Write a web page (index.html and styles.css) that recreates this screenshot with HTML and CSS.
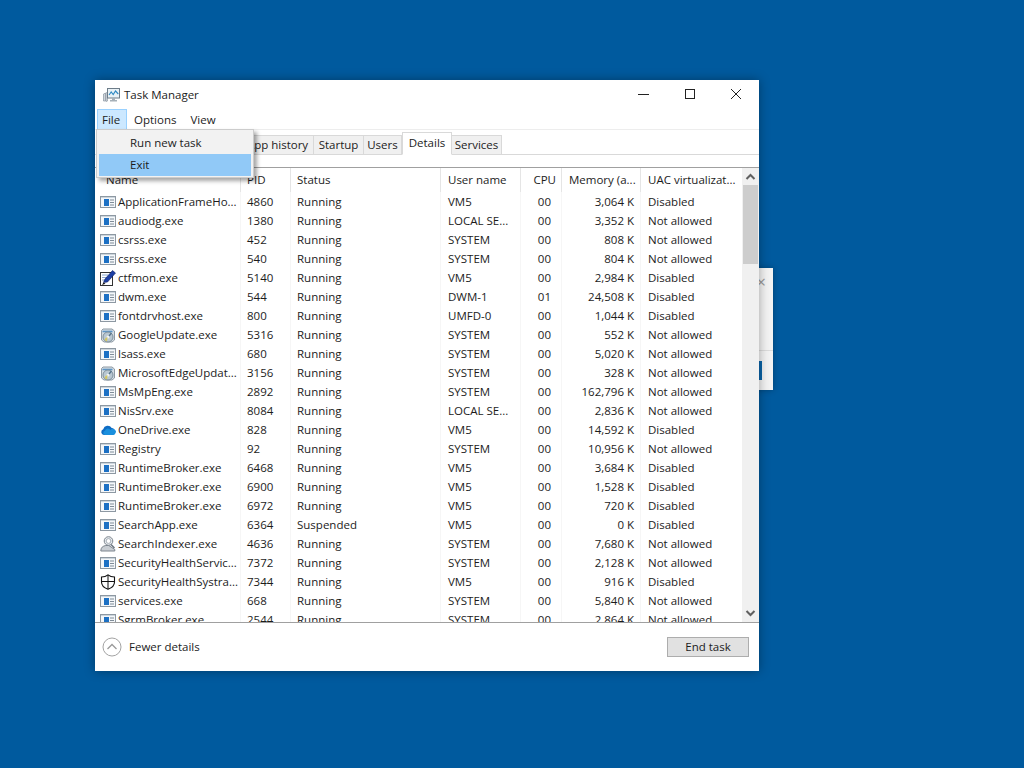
FILE: index.html
```html
<!DOCTYPE html>
<html lang="en">
<head>
<meta charset="utf-8">
<title>Task Manager</title>
<link rel="stylesheet" href="styles.css">
</head>
<body>
<svg class="defs" width="0" height="0">
<symbol id="app" viewBox="0 0 16 16"><rect x=".5" y="2.500" width="15" height="11" fill="#f4f7fa" stroke="#8d98a2"/><rect x="1" y="3" width="14" height="1" fill="#ccd5dc"/><rect x="4" y="5" width="5" height="7" fill="#1c70c4"/><path d="M10 6h4M10 8.500h4M10 11h4" stroke="#7f8c98"/></symbol>
<symbol id="pen" viewBox="0 0 16 16"><rect x=".5" y="2.500" width="12" height="13" fill="#fff" stroke="#333"/><path d="M2 5h6M2 7.500h5M2 10h3" stroke="#8aa8d0"/><path d="M3.500 12.500L5 9l7.500-8.500 3 2.500L7.500 12z" fill="#1d3fa6" stroke="#0c1e60" stroke-width=".6"/><path d="M2 15l1.500-2.500 2 1.200z" fill="#111"/></symbol>
<symbol id="upd" viewBox="0 0 16 16"><path d="M3 2h9l2.500 2v9L12 15H4l-2.500-2V3.500z" fill="#d5dde3" stroke="#8f9ba5"/><path d="M2.500 4.500h10" stroke="#5c95c6" stroke-width="1.600"/><circle cx="8" cy="10" r="5" fill="#b9c7d1" stroke="#7d8f9c"/><circle cx="8" cy="10" r="1.500" fill="#eef2f5"/><path d="M4.500 13a4.500 4.500 0 0 1 3-3l-.5 4.500z" fill="#d5c760"/><path d="M9 9l2.500-3" stroke="#55738a" stroke-width="1.300"/></symbol>
<symbol id="cloud" viewBox="0 0 16 16"><path d="M4 13a3 3 0 0 1-.8-5.800A4.700 4.700 0 0 1 11.700 6 3.600 3.600 0 0 1 12.500 13z" fill="#0f6cc4"/><path d="M5 13a2.200 2.200 0 0 1 0-4.300 3 3 0 0 1 5.500-.6 2.600 2.600 0 0 1 4.800 3.400Q14.800 13 12.500 13z" fill="#1a8fdd"/></symbol>
<symbol id="user" viewBox="0 0 16 16"><path d="M.8 15c0-3.500 2-5 5-5.500h3l6 4v1.500z" fill="#c9ced3" stroke="#7c858e"/><circle cx="8.500" cy="5" r="4.300" fill="#e9ecef" stroke="#7c858e"/><circle cx="8.500" cy="5" r="2.400" fill="#fff" stroke="#a5aeb6"/><path d="M11 8.500l3.500 3.500" stroke="#6c7680" stroke-width="1.500"/></symbol>
<symbol id="shield" viewBox="0 0 16 16"><path d="M8 .8C6 2.500 4 3 1.500 3v5c0 3.500 3 6 6.500 7.300 3.500-1.300 6.500-3.800 6.500-7.300V3C12 3 10 2.500 8 .8z" fill="#fff" stroke="#111" stroke-width="1.100"/><path d="M8 1v14M1.500 7.500h13" stroke="#111"/></symbol>
</svg>

<div class="backwin">
  <span class="backx">×</span>
  <div class="backsep"></div>
  <div class="backbtn"></div>
</div>

<main class="window">
  <header class="titlebar">
    <svg class="appicon" width="17" height="16" viewBox="0 0 17 16"><path d="M.5 14V7l2-1v8z" fill="#cfd6dc" stroke="#8a95a0" stroke-width=".7"/><path d="M3 6l1.500-1v9L3 14.500z" fill="#dfe4e8" stroke="#8f9aa4" stroke-width=".7"/><rect x="4.500" y="1.500" width="12" height="9.500" fill="#e9f2f7" stroke="#6d7c88"/><path d="M6 8l2.200-3 2 2.500 2.300-3.500 2.800 3" fill="none" stroke="#2f8ac4" stroke-width="1.100"/><path d="M9 11h3v2h2v1.500H7V13h2z" fill="#a6b0b8"/></svg>
    <span class="title">Task Manager</span>
    <div class="winbtns">
      <svg width="12" height="12" viewBox="0 0 12 12"><path d="M0 6.500h11" stroke="#222"/></svg>
      <svg width="12" height="12" viewBox="0 0 12 12"><rect x="1.500" y="1.500" width="9" height="9" fill="none" stroke="#222"/></svg>
      <svg width="12" height="12" viewBox="0 0 12 12"><path d="M1 1l10 10M11 1L1 11" stroke="#222"/></svg>
    </div>
  </header>
  <nav class="menubar">
    <span class="mi mi-file">File</span>
    <span class="mi mi-options">Options</span>
    <span class="mi mi-view">View</span>
  </nav>
  <div class="tabs">
    <span class="tab t-proc">Processes</span>
    <span class="tab t-perf">Performance</span>
    <span class="tab t-hist">App history</span>
    <span class="tab t-start">Startup</span>
    <span class="tab t-users">Users</span>
    <span class="tab active">Details</span>
    <span class="tab t-serv">Services</span>
  </div>
  <section class="tablewrap">
    <div class="table">
      <div class="row head"><span class="name">Name</span><span>PID</span><span>Status</span><span>User name</span><span class="r">CPU</span><span>Memory (a...</span><span>UAC virtualizat...</span></div>
      <div class="row"><span class="name"><svg class="ic"><use href="#app"/></svg>ApplicationFrameHo...</span><span>4860</span><span>Running</span><span>VM5</span><span class="r">00</span><span class="r">3,064 K</span><span>Disabled</span></div>
      <div class="row"><span class="name"><svg class="ic"><use href="#app"/></svg>audiodg.exe</span><span>1380</span><span>Running</span><span>LOCAL SE...</span><span class="r">00</span><span class="r">3,352 K</span><span>Not allowed</span></div>
      <div class="row"><span class="name"><svg class="ic"><use href="#app"/></svg>csrss.exe</span><span>452</span><span>Running</span><span>SYSTEM</span><span class="r">00</span><span class="r">808 K</span><span>Not allowed</span></div>
      <div class="row"><span class="name"><svg class="ic"><use href="#app"/></svg>csrss.exe</span><span>540</span><span>Running</span><span>SYSTEM</span><span class="r">00</span><span class="r">804 K</span><span>Not allowed</span></div>
      <div class="row"><span class="name"><svg class="ic"><use href="#pen"/></svg>ctfmon.exe</span><span>5140</span><span>Running</span><span>VM5</span><span class="r">00</span><span class="r">2,984 K</span><span>Disabled</span></div>
      <div class="row"><span class="name"><svg class="ic"><use href="#app"/></svg>dwm.exe</span><span>544</span><span>Running</span><span>DWM-1</span><span class="r">01</span><span class="r">24,508 K</span><span>Disabled</span></div>
      <div class="row"><span class="name"><svg class="ic"><use href="#app"/></svg>fontdrvhost.exe</span><span>800</span><span>Running</span><span>UMFD-0</span><span class="r">00</span><span class="r">1,044 K</span><span>Disabled</span></div>
      <div class="row"><span class="name"><svg class="ic"><use href="#upd"/></svg>GoogleUpdate.exe</span><span>5316</span><span>Running</span><span>SYSTEM</span><span class="r">00</span><span class="r">552 K</span><span>Not allowed</span></div>
      <div class="row"><span class="name"><svg class="ic"><use href="#app"/></svg>lsass.exe</span><span>680</span><span>Running</span><span>SYSTEM</span><span class="r">00</span><span class="r">5,020 K</span><span>Not allowed</span></div>
      <div class="row"><span class="name"><svg class="ic"><use href="#upd"/></svg>MicrosoftEdgeUpdat...</span><span>3156</span><span>Running</span><span>SYSTEM</span><span class="r">00</span><span class="r">328 K</span><span>Not allowed</span></div>
      <div class="row"><span class="name"><svg class="ic"><use href="#app"/></svg>MsMpEng.exe</span><span>2892</span><span>Running</span><span>SYSTEM</span><span class="r">00</span><span class="r">162,796 K</span><span>Not allowed</span></div>
      <div class="row"><span class="name"><svg class="ic"><use href="#app"/></svg>NisSrv.exe</span><span>8084</span><span>Running</span><span>LOCAL SE...</span><span class="r">00</span><span class="r">2,836 K</span><span>Not allowed</span></div>
      <div class="row"><span class="name"><svg class="ic"><use href="#cloud"/></svg>OneDrive.exe</span><span>828</span><span>Running</span><span>VM5</span><span class="r">00</span><span class="r">14,592 K</span><span>Disabled</span></div>
      <div class="row"><span class="name"><svg class="ic"><use href="#app"/></svg>Registry</span><span>92</span><span>Running</span><span>SYSTEM</span><span class="r">00</span><span class="r">10,956 K</span><span>Not allowed</span></div>
      <div class="row"><span class="name"><svg class="ic"><use href="#app"/></svg>RuntimeBroker.exe</span><span>6468</span><span>Running</span><span>VM5</span><span class="r">00</span><span class="r">3,684 K</span><span>Disabled</span></div>
      <div class="row"><span class="name"><svg class="ic"><use href="#app"/></svg>RuntimeBroker.exe</span><span>6900</span><span>Running</span><span>VM5</span><span class="r">00</span><span class="r">1,528 K</span><span>Disabled</span></div>
      <div class="row"><span class="name"><svg class="ic"><use href="#app"/></svg>RuntimeBroker.exe</span><span>6972</span><span>Running</span><span>VM5</span><span class="r">00</span><span class="r">720 K</span><span>Disabled</span></div>
      <div class="row"><span class="name"><svg class="ic"><use href="#app"/></svg>SearchApp.exe</span><span>6364</span><span>Suspended</span><span>VM5</span><span class="r">00</span><span class="r">0 K</span><span>Disabled</span></div>
      <div class="row"><span class="name"><svg class="ic"><use href="#user"/></svg>SearchIndexer.exe</span><span>4636</span><span>Running</span><span>SYSTEM</span><span class="r">00</span><span class="r">7,680 K</span><span>Not allowed</span></div>
      <div class="row"><span class="name"><svg class="ic"><use href="#app"/></svg>SecurityHealthServic...</span><span>7372</span><span>Running</span><span>SYSTEM</span><span class="r">00</span><span class="r">2,128 K</span><span>Not allowed</span></div>
      <div class="row"><span class="name"><svg class="ic"><use href="#shield"/></svg>SecurityHealthSystra...</span><span>7344</span><span>Running</span><span>VM5</span><span class="r">00</span><span class="r">916 K</span><span>Disabled</span></div>
      <div class="row"><span class="name"><svg class="ic"><use href="#app"/></svg>services.exe</span><span>668</span><span>Running</span><span>SYSTEM</span><span class="r">00</span><span class="r">5,840 K</span><span>Not allowed</span></div>
      <div class="row"><span class="name"><svg class="ic"><use href="#app"/></svg>SgrmBroker.exe</span><span>2544</span><span>Running</span><span>SYSTEM</span><span class="r">00</span><span class="r">2,864 K</span><span>Not allowed</span></div>
    </div>
    <div class="scrollbar">
      <svg class="arrow" width="15" height="17" viewBox="0 0 15 17"><path d="M3.500 11l4-4 4 4" fill="none" stroke="#606060" stroke-width="2"/></svg>
      <div class="track"><div class="thumb"></div></div>
      <svg class="arrow" width="15" height="17" viewBox="0 0 15 17"><path d="M3.500 6l4 4 4-4" fill="none" stroke="#606060" stroke-width="2"/></svg>
    </div>
  </section>
  <footer class="footer">
    <svg class="fewer" width="20" height="20" viewBox="0 0 20 20"><circle cx="10" cy="10" r="9" fill="#fff" stroke="#a3a3a3"/><path d="M5.500 12L10 7.500l4.500 4.500" fill="none" stroke="#9a9a9a" stroke-width="1.300"/></svg>
    <span class="fewertext">Fewer details</span>
    <button class="endtask">End task</button>
  </footer>
  <div class="menu">
    <div class="menuitem">Run new task</div>
    <div class="menuitem hl">Exit</div>
  </div>
</main>
</body>
</html>
```
FILE: styles.css
```css
* { box-sizing: border-box; }
html, body { margin: 0; height: 100%; }
body {
  position: relative;
  height: 768px;
  overflow: hidden;
  background: #005a9e;
  font-family: "Open Sans", "Noto Sans", sans-serif;
  font-size: 11.5px;
  color: #1c1c1c;
}
.defs { position: absolute; }
.backwin {
  position: absolute;
  left: 700px;
  top: 268px;
  width: 73px;
  height: 122px;
  background: #f3f3f3;
  box-shadow: 0 0 6px rgba(0, 0, 0, .3);
}
.backx { position: absolute; right: 7px; top: 4px; font-size: 17px; line-height: 20px; color: #999; }
.backsep { position: absolute; left: 0; right: 0; top: 82px; height: 1px; background: #dcdcdc; }
.backbtn { position: absolute; left: 0; top: 93px; width: 62px; height: 19px; background: #0a64a8; }
.window {
  position: absolute;
  left: 95px;
  top: 80px;
  width: 664px;
  height: 591px;
  display: flex;
  flex-direction: column;
  background: #fff;
  box-shadow: 0 0 10px rgba(0, 0, 0, .35);
}
.titlebar { height: 29px; display: flex; align-items: center; padding-left: 8px; }
.appicon { flex: none; }
.title { margin-left: 4px; }
.winbtns { margin: 0 0 2px auto; display: flex; gap: 34px; padding-right: 17px; }
.menubar {
  height: 21px;
  border-bottom: 1px solid #ededed;
  display: flex;
  align-items: center;
}
.mi { display: flex; align-items: center; height: 20px; }
.mi-file { margin-left: 2px; width: 30px; padding-left: 4px; background: #cce8ff; border: 1px solid #99d1ff; border-bottom: 0; }
.mi-options { margin-left: 7px; }
.mi-view { margin-left: 14px; }
.tabs {
  height: 25px;
  display: flex;
  align-items: flex-end;
  padding-left: 3px;
  border-bottom: 1px solid #d9d9d9;
}
.tab {
  height: 20px;
  margin-bottom: -1px;
  padding-bottom: 2px;
  display: flex;
  align-items: center;
  justify-content: center;
  background: #f0f0f0;
  border: 1px solid #d9d9d9;
  border-left-width: 0;
}
.t-proc { width: 66px; }
.t-perf { width: 78px; }
.t-hist { width: 72px; }
.t-start { width: 50px; }
.t-users { width: 38px; }
.t-serv { width: 50px; }
.tab.active {
  width: 50px;
  height: 23px;
  background: #fff;
  border-left-width: 1px;
  border-bottom-color: #fff;
  padding-bottom: 3px;
  z-index: 1;
}
.tablewrap {
  margin-top: 12px;
  height: 456px;
  display: flex;
  border-top: 1px solid #a0a0a0;
  border-bottom: 1px solid #a0a0a0;
}
.table { width: 647px; overflow: hidden; }
.row {
  display: grid;
  grid-template-columns: 146px 50px 150px 80px 41px 79px 101px;
  height: 19px;
  line-height: 19px;
  white-space: nowrap;
}
.row span { padding-left: 6px; overflow: hidden; border-right: 1px solid #f6f6f6; }
.row span:nth-child(4) { padding-left: 7px; }
.row span:last-child { padding-left: 7px; border-right: 0; }
.row .name { display: flex; align-items: center; padding-left: 5px; }
.row .r { padding-left: 0; padding-right: 6px; text-align: right; }
.row span:nth-child(5).r { padding-right: 10px; }
.row.head { height: 24px; line-height: 24px; }
.row.head span { border-right-color: #e5e5e5; }
.row.head span:nth-child(5).r { padding-right: 5px; }
.row.head span:nth-child(6) { padding-left: 7px; }
.row.head .name { padding-left: 11px; }
.ic { width: 16px; height: 16px; flex: none; margin-right: 2px; }
.scrollbar { width: 17px; padding: 0 1px; display: flex; flex-direction: column; background: #f0f0f0; }
.arrow { flex: none; }
.track { flex: 1; }
.thumb { height: 79px; background: #cdcdcd; }
.footer { flex: 1; display: flex; align-items: center; padding: 0 10px 0 7px; }
.fewertext { margin: 0 0 2px 7px; }
.endtask {
  margin-left: auto;
  width: 82px;
  height: 20px;
  padding: 0 0 2px;
  background: #e1e1e1;
  border: 1px solid #adadad;
  font: inherit;
  color: inherit;
}
.menu {
  position: absolute;
  left: 1px;
  top: 49px;
  width: 158px;
  height: 49px;
  padding: 2px;
  background: #f2f2f2;
  border: 1px solid #ccc;
  box-shadow: 3px 3px 4px rgba(0, 0, 0, .35);
  z-index: 2;
}
.menuitem { height: 22px; line-height: 22px; padding-left: 31px; }
.menuitem.hl { background: #91c9f7; }
```
